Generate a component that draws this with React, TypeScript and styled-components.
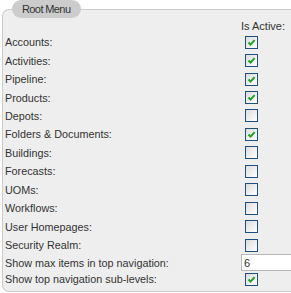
import { Fragment } from "react";
import styled, { createGlobalStyle } from "styled-components";

const GlobalStyle = createGlobalStyle`
  html, body {
    margin: 0;
    padding: 0;
    background: #ffffff;
  }
  body {
    font-family: "Liberation Sans", Arial, sans-serif;
    font-size: 11px;
    color: #333333;
    overflow: hidden;
  }
`;

const Wrapper = styled.div`
  padding-left: 2px;
`;

const Legend = styled.div`
  position: relative;
  z-index: 1;
  display: inline-block;
  margin-left: 10px;
  padding: 0 11px 0 10px;
  height: 18px;
  line-height: 18px;
  font-size: 11px;
  letter-spacing: -0.6px;
  color: #333333;
  background: #cccccc;
  border-radius: 9px;
`;

const Panel = styled.div`
  margin-top: -9px;
  padding: 0 0 4px 2px;
  border: 1px solid #cccccc;
  border-right: none;
  border-radius: 7px 0 0 7px;
  background: #eeeeee;
  display: grid;
  grid-template-columns: 236px 1fr;
`;

const Header = styled.div`
  padding-top: 10px;
  line-height: 13px;
  height: 13px;
`;

const Label = styled.div<{ $h: number }>`
  height: ${(p) => p.$h}px;
  display: flex;
  align-items: center;
  font-size: 10.8px;
  white-space: nowrap;
`;

const Value = styled.div<{ $h: number }>`
  height: ${(p) => p.$h}px;
  display: flex;
  align-items: center;
`;

const Box = styled.span`
  display: block;
  position: relative;
  margin-left: 4px;
  width: 11px;
  height: 11px;
  border: 1px solid #1f4f7d;
  background: linear-gradient(135deg, #dcdcdc, #ffffff);
`;

const Check = styled.svg`
  position: absolute;
  left: 0;
  top: 0;
`;

const TextInput = styled.input`
  display: block;
  box-sizing: border-box;
  margin: 0;
  width: 100%;
  height: 17px;
  border: 1px solid #b8b8b8;
  border-right: none;
  background: #ffffff;
  padding: 0 2px;
  font-family: "Liberation Sans", Arial, sans-serif;
  font-size: 11px;
  color: #333333;
  outline: none;
`;

function Checkbox({ checked }: { checked: boolean }) {
  return (
    <Box>
      {checked && (
        <Check width="11" height="11" viewBox="0 0 11 11">
          <path d="M2.5 5.5 L4.6 7.6 L8.6 3.2" stroke="#22a022" strokeWidth="2" fill="none" />
        </Check>
      )}
    </Box>
  );
}

const rows: [string, boolean][] = [
  ["Accounts:", true],
  ["Activities:", true],
  ["Pipeline:", true],
  ["Products:", true],
  ["Depots:", false],
  ["Folders & Documents:", true],
  ["Buildings:", false],
  ["Forecasts:", false],
  ["UOMs:", false],
  ["Workflows:", false],
  ["User Homepages:", false],
  ["Security Realm:", false],
];

const ROW = 18.45;

export default function App() {
  return (
    <>
      <GlobalStyle />
      <Wrapper>
        <Legend>Root Menu</Legend>
        <Panel>
          <Header />
          <Header>Is Active:</Header>
          {rows.map(([label, checked]) => (
            <Fragment key={label}>
              <Label $h={ROW}>{label}</Label>
              <Value $h={ROW}>
                <Checkbox checked={checked} />
              </Value>
            </Fragment>
          ))}
          <Label $h={16.5}>Show max items in top navigation:</Label>
          <Value $h={16.5}>
            <TextInput defaultValue="6" />
          </Value>
          <Label $h={16.5}>Show top navigation sub-levels:</Label>
          <Value $h={16.5}>
            <Checkbox checked />
          </Value>
        </Panel>
      </Wrapper>
    </>
  );
}
